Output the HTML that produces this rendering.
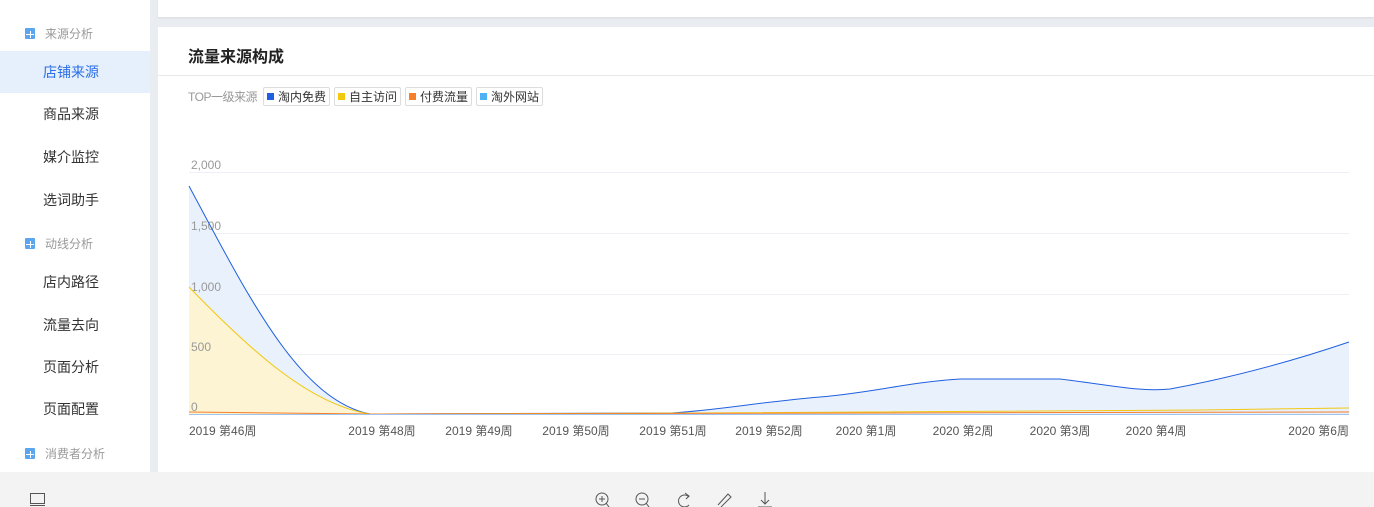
<!DOCTYPE html>
<html><head><meta charset="utf-8"><style>
*{margin:0;padding:0;box-sizing:border-box}
body{width:1374px;height:507px;overflow:hidden;background:#e9ecf1;font-family:"Liberation Sans","Noto Sans CJK SC",sans-serif;position:relative}
.side{position:absolute;left:0;top:0;width:150px;height:472px;background:#fff}
.grp{position:absolute;left:25px;font-size:12px;color:#999;display:flex;align-items:center}
.grp i{display:inline-block;width:10px;height:11px;background:#5aa7ef;margin-right:10px;border-radius:1px;background-image:linear-gradient(#fff,#fff),linear-gradient(#fff,#fff);background-size:1px 7px,8px 1px;background-position:5px 3px,1px 6px;background-repeat:no-repeat}
.item{position:absolute;left:0;width:150px;height:42px;line-height:42px;padding-left:43px;font-size:14px;color:#333}
.item.on{background:#e6effc;color:#2a6ee8}
.card1{position:absolute;left:158px;top:0;width:1216px;height:17px;background:#fff;box-shadow:0 1px 2px rgba(0,0,0,.08)}
.card2{position:absolute;left:158px;top:27px;width:1216px;height:445px;background:#fff}
.title{position:absolute;left:30px;top:16px;font-size:16px;font-weight:bold;color:#222}
.hr{position:absolute;left:0;top:48px;width:100%;height:1px;background:#e8e8e8}
.leg{position:absolute;left:30px;top:59px;font-size:12px;color:#999;display:flex;align-items:center;height:20px}
.lab{width:71px;white-space:nowrap;letter-spacing:-0.5px;overflow:hidden}
.tag{border:1px solid #ddd;border-radius:2px;height:19px;width:67px;margin-left:5px;display:flex;align-items:center;justify-content:center;color:#333;white-space:nowrap}
.tag:nth-of-type(n+2){margin-left:4px}
.tag b{width:7px;height:7px;margin-right:4px;display:inline-block}
.foot{position:absolute;left:0;top:472px;width:1374px;height:35px;background:#f3f3f3}
svg{position:absolute;left:0;top:0}
</style></head><body>
<div class="side">
<div class="grp" style="top:25px"><i></i>来源分析</div>
<div class="item on" style="top:51px">店铺来源</div>
<div class="item" style="top:93px">商品来源</div>
<div class="item" style="top:136px">媒介监控</div>
<div class="item" style="top:179px">选词助手</div>
<div class="grp" style="top:235px"><i></i>动线分析</div>
<div class="item" style="top:261px">店内路径</div>
<div class="item" style="top:304px">流量去向</div>
<div class="item" style="top:346px">页面分析</div>
<div class="item" style="top:388px">页面配置</div>
<div class="grp" style="top:445px"><i></i>消费者分析</div>
</div>
<div class="card1"></div>
<div class="card2">
<div class="title">流量来源构成</div>
<div class="hr"></div>
<div class="leg"><span class="lab">TOP一级来源</span><span class="tag"><b style="background:#1f5fe0"></b>淘内免费</span><span class="tag"><b style="background:#f2c811"></b>自主访问</span><span class="tag"><b style="background:#f57f2a"></b>付费流量</span><span class="tag"><b style="background:#4db1f5"></b>淘外网站</span></div>
</div>
<div class="foot"></div>
<svg width="1374" height="507" font-family="Liberation Sans, Noto Sans CJK SC, sans-serif">
<g stroke="#edf0f5" stroke-width="1">
<line x1="189" y1="172.5" x2="1349" y2="172.5"/><line x1="189" y1="233.5" x2="1349" y2="233.5"/>
<line x1="189" y1="294.5" x2="1349" y2="294.5"/><line x1="189" y1="354.5" x2="1349" y2="354.5"/>
</g>
<path d="M189,186 C250,300 300,400 370,414 L672,413 C720,410 760,402 820,397 C870,393 910,382 960,379 L1060,379 C1110,385 1140,392 1170,389 C1230,378 1290,362 1349,342 L1349,414 L189,414Z" fill="#e9f1fc"/>
<path d="M189,287 C250,350 310,405 370,414 L189,414Z" fill="#fcf4d2"/>
<g font-size="12" fill="#999">
<text x="191" y="169">2,000</text><text x="191" y="230">1,500</text><text x="191" y="291">1,000</text><text x="191" y="351">500</text><text x="191" y="411">0</text>
</g>
<path d="M189,186 C250,300 300,400 370,414 L672,413 C720,410 760,402 820,397 C870,393 910,382 960,379 L1060,379 C1110,385 1140,392 1170,389 C1230,378 1290,362 1349,342" fill="none" stroke="#2060e0" stroke-width="1"/>
<path d="M189,287 C250,350 310,405 370,414 L700,413 C900,411 1100,411 1200,410 C1280,409 1320,408 1349,408" fill="none" stroke="#f2c811" stroke-width="1"/>
<path d="M189,412 L370,414 L1349,412" fill="none" stroke="#f57f2a" stroke-width="1"/>
<line x1="189" y1="414.5" x2="1349" y2="414.5" stroke="#9ec4ee"/>
<g font-size="12" fill="#555">
<text x="189" y="435">2019 第46周</text>
<text x="382" y="435" text-anchor="middle">2019 第48周</text>
<text x="479" y="435" text-anchor="middle">2019 第49周</text>
<text x="576" y="435" text-anchor="middle">2019 第50周</text>
<text x="673" y="435" text-anchor="middle">2019 第51周</text>
<text x="769" y="435" text-anchor="middle">2019 第52周</text>
<text x="866" y="435" text-anchor="middle">2020 第1周</text>
<text x="963" y="435" text-anchor="middle">2020 第2周</text>
<text x="1060" y="435" text-anchor="middle">2020 第3周</text>
<text x="1156" y="435" text-anchor="middle">2020 第4周</text>
<text x="1349" y="435" text-anchor="end">2020 第6周</text>
</g>
<g fill="none" stroke="#555" stroke-width="1">
<rect x="30.5" y="493.5" width="14" height="10"/><line x1="30" y1="505.5" x2="45" y2="505.5"/>
<circle cx="602" cy="499" r="6"/><line x1="599" y1="499" x2="605" y2="499"/><line x1="602" y1="496" x2="602" y2="502"/><line x1="606" y1="503" x2="609" y2="507"/>
<circle cx="642" cy="499" r="6"/><line x1="639" y1="499" x2="645" y2="499"/><line x1="646" y1="503" x2="649" y2="507"/>
<path d="M689,497 A6,6 0 1 0 689,505"/><path d="M685,493 L689,496 L686,499" />
<path d="M718,505 L728,494 L731,497 L721,507"/>
<line x1="765" y1="492" x2="765" y2="504"/><path d="M761,500 L765,504 L769,500"/><line x1="758" y1="507" x2="772" y2="507"/>
</g>
</svg>
</body></html>
